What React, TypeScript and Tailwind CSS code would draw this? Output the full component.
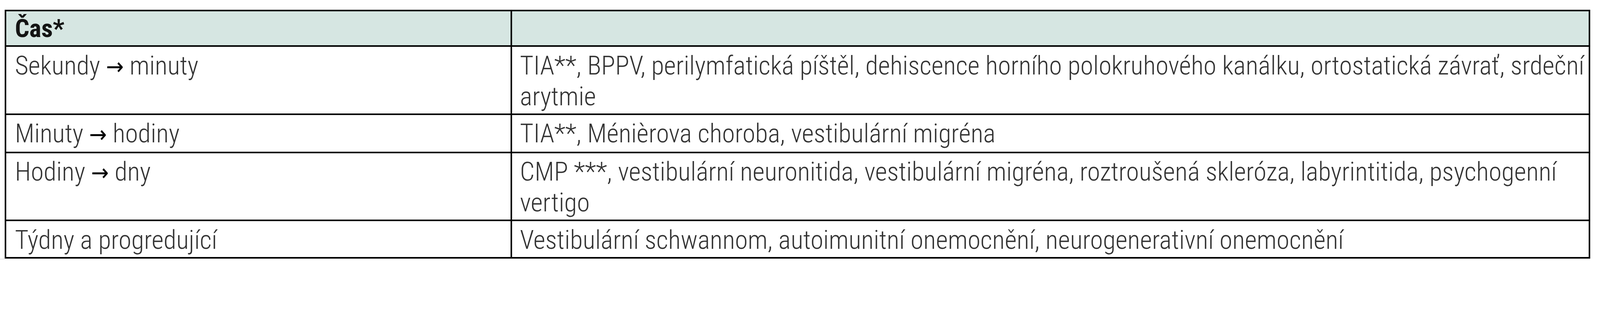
const rows = [
  {
    time: 'Sekundy',
    to: 'minuty',
    causes: [
      'TIA**, BPPV, perilymfatická píštěl, dehiscence horního polokruhového kanálku, ortostatická závrať, srdeční',
      'arytmie',
    ],
  },
  { time: 'Minuty', to: 'hodiny', causes: ['TIA**, Ménièrova choroba, vestibulární migréna'] },
  {
    time: 'Hodiny',
    to: 'dny',
    causes: [
      'CMP ***, vestibulární neuronitida, vestibulární migréna, roztroušená skleróza, labyrintitida, psychogenní',
      'vertigo',
    ],
  },
  {
    time: 'Týdny a progredující',
    to: '',
    causes: ['Vestibulární schwannom, autoimunitní onemocnění, neurogenerativní onemocnění'],
  },
];

export default function App() {
  // přizpůsobení šířce okna (tabulka je kreslena pro 4920 px)
  const scale = typeof window !== 'undefined' ? window.innerWidth / 4920 : 1;

  return (
    <div className="w-full overflow-hidden bg-white">
      <div
        style={{ zoom: scale }}
        className="w-[4920px] h-[800px] overflow-hidden bg-white pt-[30px] font-['Roboto_Condensed','Noto_Sans',sans-serif] font-stretch-condensed"
      >
        {/* Tabulka – doba trvání závratě */}
        <div className="ml-[15px] w-[4875px] border-[5px] border-black">
          <div className="flex bg-[#d6e6e2] border-b-[5px] border-black">
            <div className="w-[1555px] shrink-0 border-r-[5px] border-black pl-[26px] pt-[6px] pb-[4px] font-bold text-[78px] leading-[95px] text-[#141414]">
              Čas*
            </div>
            <div className="flex-1" />
          </div>
          {rows.map((row, i) => (
            <div
              key={row.time}
              className={`flex text-[80px] leading-[95px] font-light text-[#333] ${
                i < rows.length - 1 ? 'border-b-[5px] border-black' : ''
              }`}
            >
              <div className="w-[1555px] shrink-0 border-r-[5px] border-black pl-[26px] pt-[10px] pb-[5px] whitespace-nowrap">
                {row.time}
                {row.to && (
                  <>
                    {' '}
                    <span className="font-['DejaVu_Sans',sans-serif] text-[72px] font-normal text-black">→</span>{' '}
                    {row.to}
                  </>
                )}
              </div>
              <div className="flex-1 pl-[24px] pt-[10px] pb-[5px]">
                {row.causes.map((line) => (
                  <div key={line} className="whitespace-nowrap">
                    {line}
                  </div>
                ))}
              </div>
            </div>
          ))}
        </div>
        <div className="h-[5px] w-[4890px] bg-[#ebebeb]" />
      </div>
    </div>
  );
}
